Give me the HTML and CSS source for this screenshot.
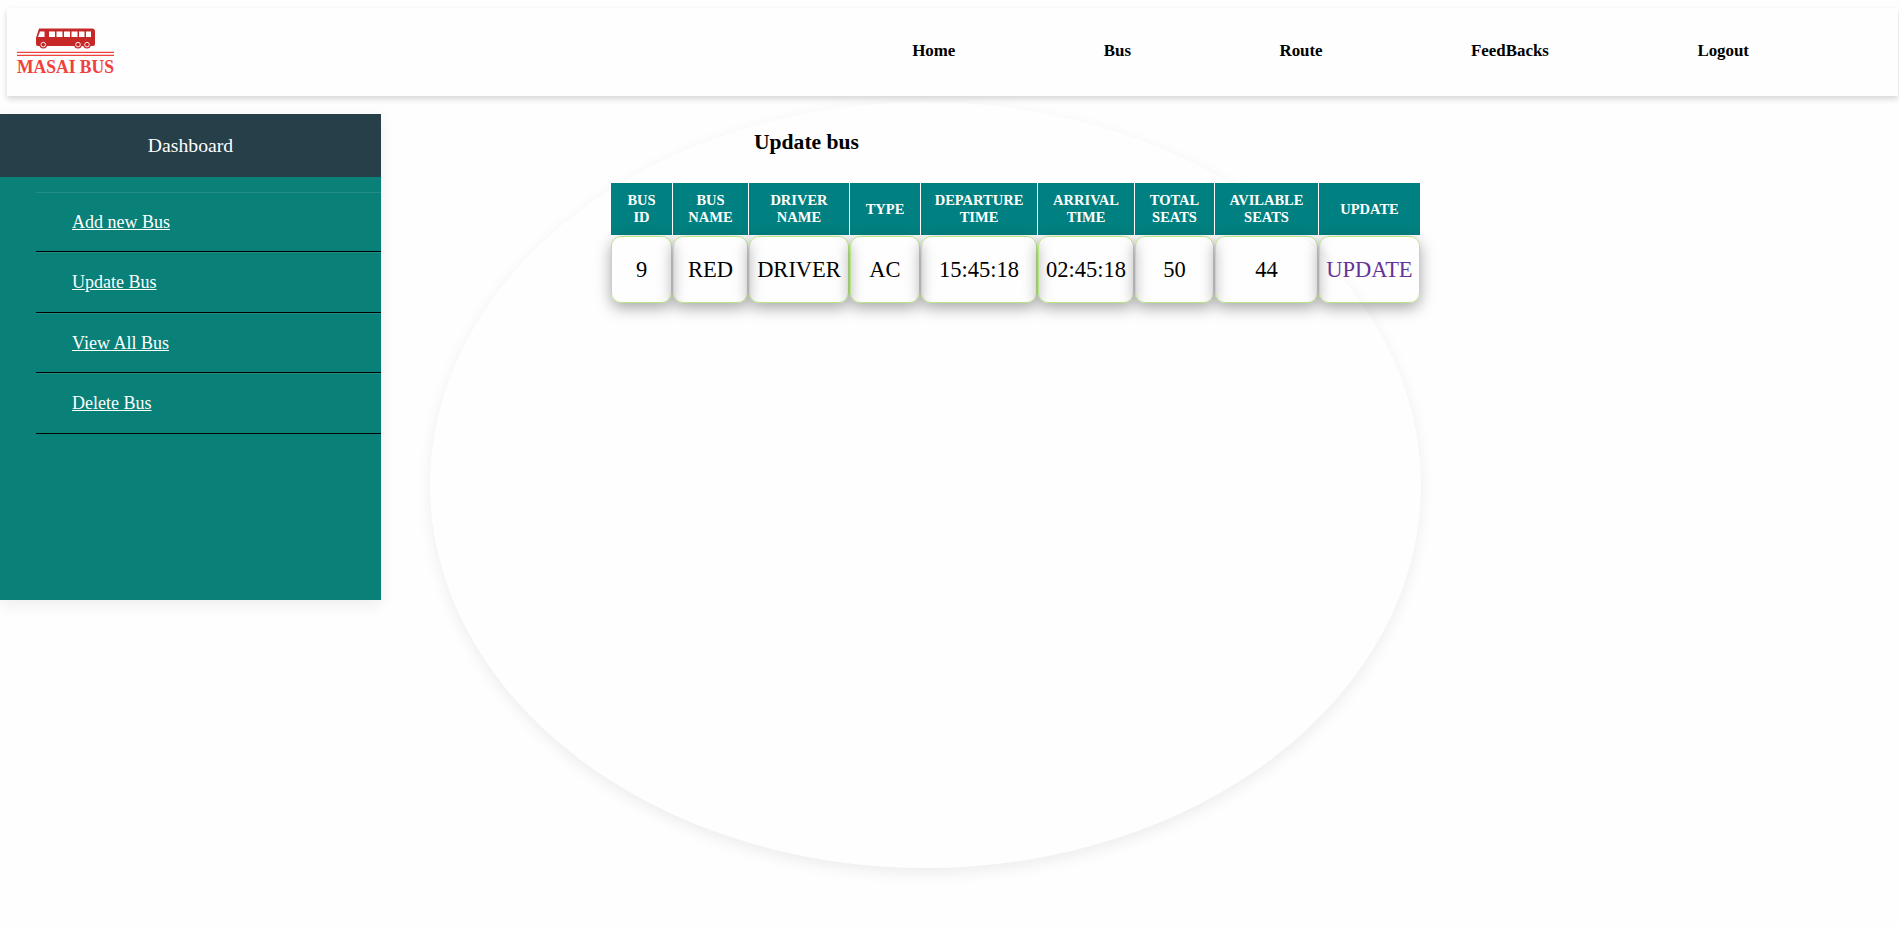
FILE: index.html
```html
<!DOCTYPE html>
<html lang="en">
<head>
<meta charset="utf-8">
<title>Masai Bus</title>
<link rel="stylesheet" href="styles.css">
</head>
<body>
<div class="halo"></div>
<header class="navbar">
  <svg class="logo" width="100" height="56" viewBox="0 -4 100 56">
    <path class="body" d="M23 .5H76Q79 .5 79 3.500V16Q79 18 77 18H22Q20 18 20 16V10Z"/>
    <path class="glass" d="M24 3.500H28.500V9H22ZM33 3.500H39V9H33ZM40.500 3.500H46.500V9H40.500ZM48 3.500H54V9H48ZM55.500 3.500H61.500V9H55.500ZM63 3.500H68.500V9H63ZM70 3.500H75V9H70Z"/>
    <g class="tyre"><circle cx="27.300" cy="16.600" r="3.900"/><circle cx="62" cy="16.600" r="3.900"/><circle cx="71" cy="16.600" r="3.900"/></g>
    <g class="wheel"><circle cx="27.300" cy="16.600" r="2.300"/><circle cx="62" cy="16.600" r="2.300"/><circle cx="71" cy="16.600" r="2.300"/></g>
    <path class="rule" d="M1 24.300H98M1 27.300H98"/>
    <text class="brand" x="1" y="45" textLength="97" lengthAdjust="spacingAndGlyphs">MASAI BUS</text>
  </svg>
  <nav class="links"><a>Home</a><a>Bus</a><a>Route</a><a>FeedBacks</a><a>Logout</a></nav>
</header>
<div class="page">
  <aside class="sidebar">
    <div class="side-title">Dashboard</div>
    <ul class="menu">
      <li><a>Add new Bus</a></li>
      <li><a>Update Bus</a></li>
      <li><a>View All Bus</a></li>
      <li><a>Delete Bus</a></li>
    </ul>
  </aside>
  <main class="content">
    <h2 class="title">Update bus</h2>
    <table class="buses">
      <colgroup><col class="c1"><col class="c2"><col class="c3"><col class="c4"><col class="c5"><col class="c6"><col class="c7"><col class="c8"><col class="c9"></colgroup>
      <thead><tr><th>BUS<br>ID</th><th>BUS<br>NAME</th><th>DRIVER<br>NAME</th><th>TYPE</th><th>DEPARTURE<br>TIME</th><th>ARRIVAL<br>TIME</th><th>TOTAL<br>SEATS</th><th>AVILABLE<br>SEATS</th><th>UPDATE</th></tr></thead>
      <tbody><tr><td>9</td><td>RED</td><td>DRIVER</td><td>AC</td><td>15:45:18</td><td>02:45:18</td><td>50</td><td>44</td><td><a class="update">UPDATE</a></td></tr></tbody>
    </table>
  </main>
</div>
</body>
</html>
```
FILE: styles.css
```css
* { box-sizing: border-box; }
body {
  margin: 0;
  height: 926px;
  overflow: hidden;
  background: #fefefe;
  font-family: "Liberation Serif", "Times New Roman", serif;
  color: #000;
}
/* large soft ellipse behind the table */
.halo {
  position: absolute;
  z-index: -1;
  left: 430px;
  top: 102px;
  width: 991px;
  height: 766px;
  border-radius: 50%;
  background: #fefefe;
  box-shadow: 0 5px 15px rgba(0, 0, 0, .07);
}
.navbar {
  display: flex;
  align-items: center;
  justify-content: space-between;
  height: 88px;
  margin: 8px 1px 0 7px;
  padding: 0 149px 0 9px;
  background: #fefefe;
  box-shadow: 0 3px 6px rgba(0, 0, 0, .16);
}
.logo { display: block; margin-top: -1px; overflow: visible; }
.logo .body { fill: #c62828; }
.logo .glass { fill: #fff; }
.logo .tyre { fill: #c62828; }
.logo .wheel { fill: #c62828; stroke: #fff; stroke-width: .9; }
.logo .rule { stroke: #f0413c; stroke-width: 1.2; }
.logo .brand { fill: #f0413c; font: bold 19.500px "Liberation Serif", serif; }
.links { display: flex; gap: 148.450px; margin-top: -2px; font-size: 16.900px; font-weight: bold; }
.page { display: flex; align-items: flex-start; margin-top: 18px; }
.sidebar {
  width: 381px;
  height: 486px;
  background: #098078;
  color: #fff;
  box-shadow: 0 5px 15px rgba(0, 0, 0, .07);
}
.side-title {
  height: 63px;
  line-height: 63px;
  background: #263f49;
  text-align: center;
  font-size: 19.700px;
}
.menu { list-style: none; margin: 15px 0 0; padding: 0 0 0 36px; }
.menu li {
  height: 60.400px;
  line-height: 59.400px;
  padding-left: 36px;
  border-top: 1px solid rgba(255, 255, 255, .1);
  border-bottom: 1px solid #000;
  font-size: 18px;
}
.menu a { text-decoration: underline; }
.content { margin-left: 229px; }
.title { margin: 15px 0 0 144px; font-size: 21.600px; line-height: 26px; }
.buses {
  table-layout: fixed;
  width: 811px;
  margin-top: 27px;
  border-spacing: 1px;
  text-align: center;
}
.c1 { width: 61px; } .c2 { width: 75px; } .c3 { width: 100px; }
.c4 { width: 70px; } .c5 { width: 116px; } .c6 { width: 96px; }
.c7 { width: 79px; } .c8 { width: 103px; } .c9 { width: 101px; }
.buses th {
  height: 52px;
  padding: 0;
  background: #008080;
  color: #fff;
  font-size: 14.500px;
  line-height: 17px;
}
.buses td {
  height: 67px;
  padding: 0;
  border: 1px solid #b9e588;
  border-radius: 10px;
  font-size: 22.500px;
  box-shadow: 0 5px 15px rgba(0, 0, 0, .35);
}
.update { color: #663399; }
```
